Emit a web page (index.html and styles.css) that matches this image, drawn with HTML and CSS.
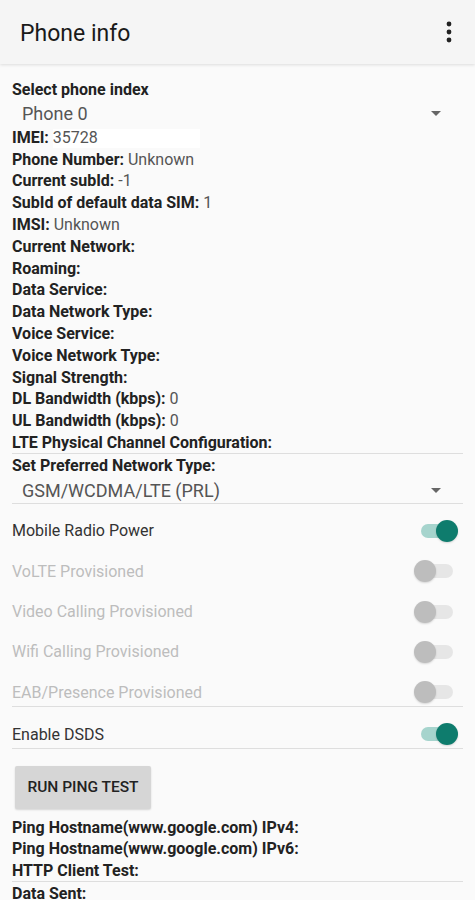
FILE: index.html
```html
<html>
<head>
    <title>Phone info</title>
    <meta name="viewport" content="width=device-width, initial-scale=1" />
    <link rel="stylesheet" href="styles.css">
</head>
<body>
<header class="toolbar">
    <h1>Phone info</h1>
    <svg class="menu" width="6" height="22" viewBox="0 0 6 22">
        <circle cx="3" cy="3" r="2.4" fill="#222"/>
        <circle cx="3" cy="11" r="2.4" fill="#222"/>
        <circle cx="3" cy="19" r="2.4" fill="#222"/>
    </svg>
</header>

<main class="content">
    <div class="row"><b>Select phone index</b></div>
    <div class="spinner phone">
        <span>Phone 0</span>
        <span class="arrow"></span>
    </div>

    <div class="row"><b>IMEI:</b> <span class="redact">35728</span></div>
    <div class="row"><b>Phone Number:</b> Unknown</div>
    <div class="row"><b>Current subId:</b> -1</div>
    <div class="row"><b>SubId of default data SIM:</b> 1</div>
    <div class="row"><b>IMSI:</b> Unknown</div>
    <div class="row"><b>Current Network:</b></div>
    <div class="row"><b>Roaming:</b></div>
    <div class="row"><b>Data Service:</b></div>
    <div class="row"><b>Data Network Type:</b></div>
    <div class="row"><b>Voice Service:</b></div>
    <div class="row"><b>Voice Network Type:</b></div>
    <div class="row"><b>Signal Strength:</b></div>
    <div class="row"><b>DL Bandwidth (kbps):</b> 0</div>
    <div class="row"><b>UL Bandwidth (kbps):</b> 0</div>
    <div class="row"><b>LTE Physical Channel Configuration:</b></div>
    <hr>
    <div class="row"><b>Set Preferred Network Type:</b></div>
    <div class="spinner network">
        <span>GSM/WCDMA/LTE (PRL)</span>
        <span class="arrow"></span>
    </div>
    <hr>

    <div class="switch-row">
        <span>Mobile Radio Power</span>
        <span class="switch on"><i></i></span>
    </div>
    <div class="switch-row disabled">
        <span>VoLTE Provisioned</span>
        <span class="switch"><i></i></span>
    </div>
    <div class="switch-row disabled">
        <span>Video Calling Provisioned</span>
        <span class="switch"><i></i></span>
    </div>
    <div class="switch-row disabled">
        <span>Wifi Calling Provisioned</span>
        <span class="switch"><i></i></span>
    </div>
    <div class="switch-row disabled">
        <span>EAB/Presence Provisioned</span>
        <span class="switch"><i></i></span>
    </div>
    <hr>
    <div class="switch-row dsds">
        <span>Enable DSDS</span>
        <span class="switch on"><i></i></span>
    </div>
    <hr>

    <button class="ping">RUN PING TEST</button>

    <div class="row"><b>Ping Hostname(www.google.com) IPv4:</b></div>
    <div class="row"><b>Ping Hostname(www.google.com) IPv6:</b></div>
    <div class="row"><b>HTTP Client Test:</b></div>
    <hr>
    <div class="row"><b>Data Sent:</b></div>
</main>
</body>
</html>
```

FILE: styles.css
```css
body {
    margin: 0;
    background: #fafafa;
    font-family: Roboto, "Liberation Sans", sans-serif;
    color: #222;
    overflow: hidden;
}

.toolbar {
    height: 64px;
    background: #f5f5f5;
    display: flex;
    align-items: center;
    justify-content: space-between;
    padding: 0 23px 0 20px;
    box-shadow: 0 1px 3px rgba(0, 0, 0, 0.12);
    position: relative;
}

.toolbar h1 {
    margin: 2px 0 0 0;
    font-size: 23px;
    font-weight: 400;
    color: #1a1a1a;
}

.content {
    padding: 14px 12px 0 12px;
}

.row {
    height: 21.8px;
    box-sizing: border-box;
    padding-top: 3px;
    line-height: 18.8px;
    font-size: 16px;
    color: #555;
    white-space: nowrap;
}

.row b {
    font-weight: 700;
    color: #222;
}

.redact {
    display: inline-block;
    background: #fff;
    width: 147px;
}

.spinner {
    height: 24px;
    padding: 2px 22px 0 10px;
    display: flex;
    align-items: center;
    justify-content: space-between;
    font-size: 18px;
    color: #555;
}

.network {
    height: 25px;
}

.arrow {
    width: 0;
    height: 0;
    border-left: 5px solid transparent;
    border-right: 5px solid transparent;
    border-top: 5px solid #666;
}

hr {
    border: 0;
    border-top: 1px solid #dedede;
    margin: 0;
}

.switch-row {
    height: 40.4px;
    box-sizing: border-box;
    padding: 14px 10px 0 0;
    display: flex;
    align-items: center;
    justify-content: space-between;
    font-size: 16px;
    color: #333;
}

.switch-row.disabled {
    color: #bdbdbd;
}

.dsds {
    height: 41px;
}

.switch {
    position: relative;
    width: 32px;
    height: 14px;
    border-radius: 7px;
    background: #e6e6e6;
}

.switch i {
    position: absolute;
    top: -4px;
    left: -7px;
    width: 22px;
    height: 22px;
    border-radius: 50%;
    background: #bdbdbd;
    box-shadow: 0 1px 2px rgba(0, 0, 0, 0.15);
}

.switch.on {
    background: #a6d4cd;
}

.switch.on i {
    left: auto;
    right: -5px;
    background: #0e7c6d;
}

.ping {
    display: block;
    margin: 17px 0 7px 3px;
    width: 136px;
    height: 43px;
    border: 0;
    border-radius: 2px;
    background: #d6d6d6;
    box-shadow: 0 1px 2px rgba(0, 0, 0, 0.15);
    font-family: Roboto, "Liberation Sans", sans-serif;
    font-size: 15.5px;
    font-weight: 500;
    color: #222;
}
```
